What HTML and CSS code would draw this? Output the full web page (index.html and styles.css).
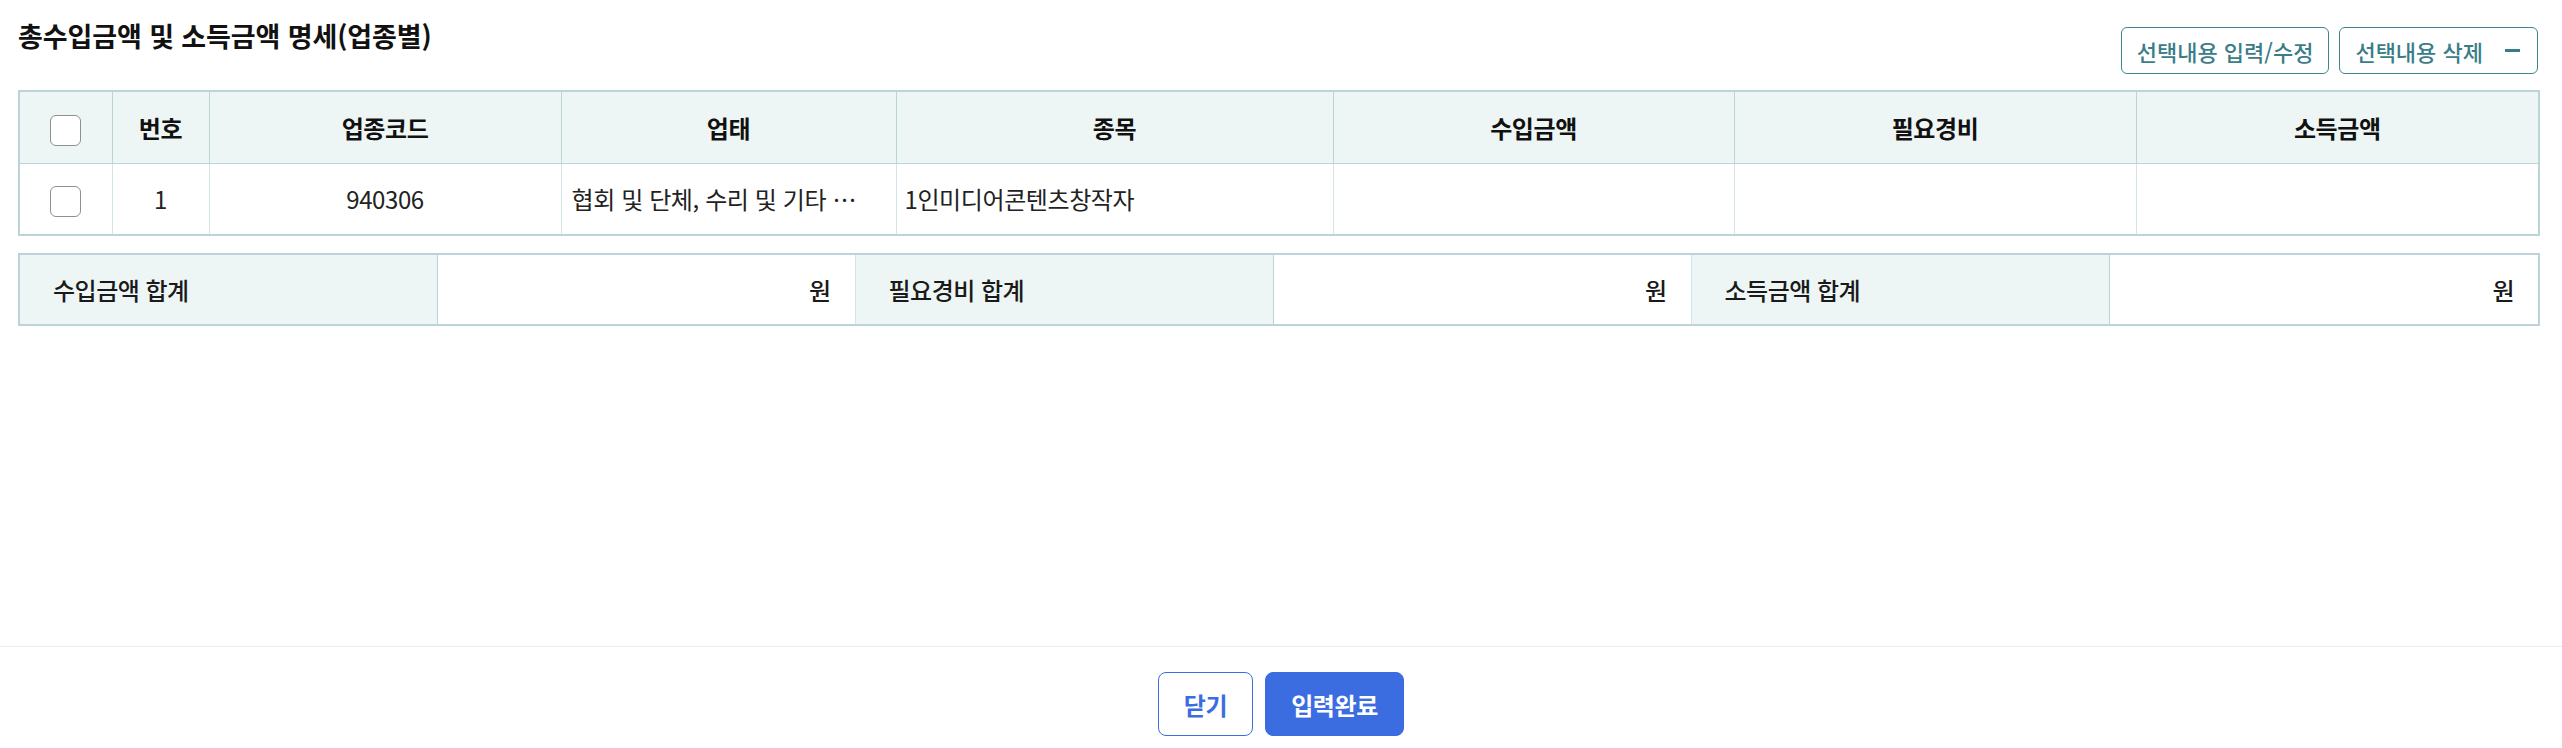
FILE: index.html
```html
<!DOCTYPE html>
<html lang="ko">
<head>
<meta charset="utf-8">
<title>총수입금액 및 소득금액 명세(업종별)</title>
<link rel="stylesheet" href="styles.css">
</head>
<body>
<div class="page">
  <main class="content">
    <div class="top">
      <h1 class="title">총수입금액 및 소득금액 명세(업종별)</h1>
      <div class="actions">
        <button class="btn-outline">선택내용 입력/수정</button>
        <button class="btn-outline">선택내용 삭제<span class="minus"></span></button>
      </div>
    </div>

    <table class="grid">
      <colgroup>
        <col class="c-chk"><col class="c-no"><col class="c-code"><col class="c-type"><col class="c-item"><col class="c-amt"><col class="c-amt2"><col class="c-amt3">
      </colgroup>
      <thead>
        <tr>
          <th><span class="chk"></span></th>
          <th>번호</th>
          <th>업종코드</th>
          <th>업태</th>
          <th>종목</th>
          <th>수입금액</th>
          <th>필요경비</th>
          <th>소득금액</th>
        </tr>
      </thead>
      <tbody>
        <tr>
          <td class="center"><span class="chk"></span></td>
          <td class="center">1</td>
          <td class="center">940306</td>
          <td class="left">협회 및 단체, 수리 및 기타 …</td>
          <td class="left item">1인미디어콘텐츠창작자</td>
          <td></td>
          <td></td>
          <td></td>
        </tr>
      </tbody>
    </table>

    <table class="sum">
      <colgroup>
        <col class="s-col"><col class="s-col"><col class="s-col"><col class="s-col"><col class="s-col"><col class="s-last">
      </colgroup>
      <tr>
        <th>수입금액 합계</th>
        <td>원</td>
        <th>필요경비 합계</th>
        <td>원</td>
        <th>소득금액 합계</th>
        <td>원</td>
      </tr>
    </table>
  </main>

  <footer class="footer">
    <button class="btn-close">닫기</button>
    <button class="btn-primary">입력완료</button>
  </footer>
</div>
</body>
</html>
```

FILE: styles.css
```css
* { box-sizing: border-box; }

html, body {
  margin: 0;
  padding: 0;
  background: #ffffff;
}

body {
  font-family: "Noto Sans CJK KR", "Noto Sans", sans-serif;
  color: #1a1a1a;
}

.page {
  height: 100vh;
  display: flex;
  flex-direction: column;
}

.content {
  flex: 1;
  padding: 17px 24px 0 18px;
}

.top {
  display: flex;
  justify-content: space-between;
  align-items: flex-start;
}

.title {
  margin: 0;
  font-size: 27px;
  line-height: 38px;
  font-weight: 700;
  color: #111;
  letter-spacing: -0.1px;
}

.actions {
  display: flex;
  gap: 10px;
  margin-top: 10px;
}

.btn-outline {
  height: 47px;
  padding: 0 15px;
  border: 1px solid #3e8591;
  border-radius: 6px;
  background: #fff;
  color: #3a7d89;
  font-family: inherit;
  font-size: 22px;
  font-weight: 500;
  letter-spacing: 0;
  display: flex;
  align-items: center;
}

.minus {
  display: inline-block;
  width: 15px;
  height: 3px;
  background: #3a7d89;
  margin-left: 22px;
  margin-right: 2px;
}

.grid {
  width: 100%;
  margin-top: 16px;
  border-collapse: collapse;
  table-layout: fixed;
  border: 2px solid #bcd4d9;
}

.c-chk { width: 93px; }
.c-no { width: 97px; }
.c-code { width: 352px; }
.c-type { width: 335px; }
.c-item { width: 437px; }
.c-amt { width: 401px; }
.c-amt2 { width: 402px; }
.c-amt3 { width: 403px; }

.grid th {
  height: 72px;
  background: #eef6f5;
  border: 1px solid #bcd4d9;
  font-size: 24px;
  font-weight: 700;
  color: #111;
  text-align: center;
  padding: 0;
  letter-spacing: -0.4px;
}

.grid td {
  height: 72px;
  border-left: 1px solid #d3e5e9;
  border-right: 1px solid #d3e5e9;
  border-bottom: 1px solid #bcd4d9;
  font-size: 24px;
  font-weight: 400;
  color: #222;
  padding: 0 10px;
  white-space: nowrap;
  overflow: hidden;
  letter-spacing: -0.4px;
}

.grid td.center { text-align: center; padding: 0; }
.grid td.left { text-align: left; }
.grid td.item { padding-left: 8px; }

.chk {
  display: inline-block;
  width: 31px;
  height: 31px;
  border: 1px solid #8f8f8f;
  border-radius: 6px;
  background: #fff;
  vertical-align: middle;
}

.sum {
  width: 100%;
  margin-top: 17px;
  border-collapse: collapse;
  table-layout: fixed;
  border: 2px solid #bcd4d9;
}

.s-col { width: 418px; }
.s-last { width: 430px; }

.sum th,
.sum td {
  height: 71px;
  border: 1px solid #bcd4d9;
  font-size: 24px;
  letter-spacing: -0.5px;
}

.sum th {
  background: #eef6f5;
  text-align: left;
  font-weight: 500;
  color: #1a1a1a;
  padding: 0 0 0 33px;
}

.sum td {
  background: #fff;
  text-align: right;
  font-weight: 500;
  color: #1a1a1a;
  padding: 0 24px 0 0;
  border-left-color: #d3e5e9;
  border-right-color: #d3e5e9;
}

.footer {
  border-top: 1px solid #e9eef6;
  display: flex;
  justify-content: center;
  gap: 12px;
  padding: 25px 0 12px;
}

.btn-close,
.btn-primary {
  height: 64px;
  border-radius: 8px;
  font-family: inherit;
  font-size: 24px;
  font-weight: 700;
  letter-spacing: -0.4px;
}

.btn-close {
  width: 95px;
  border: 1px solid #3b6de0;
  background: #fff;
  color: #3b6de0;
}

.btn-primary {
  width: 139px;
  border: 1px solid #3b6ce0;
  background: #3b6ce0;
  color: #fff;
}
```
